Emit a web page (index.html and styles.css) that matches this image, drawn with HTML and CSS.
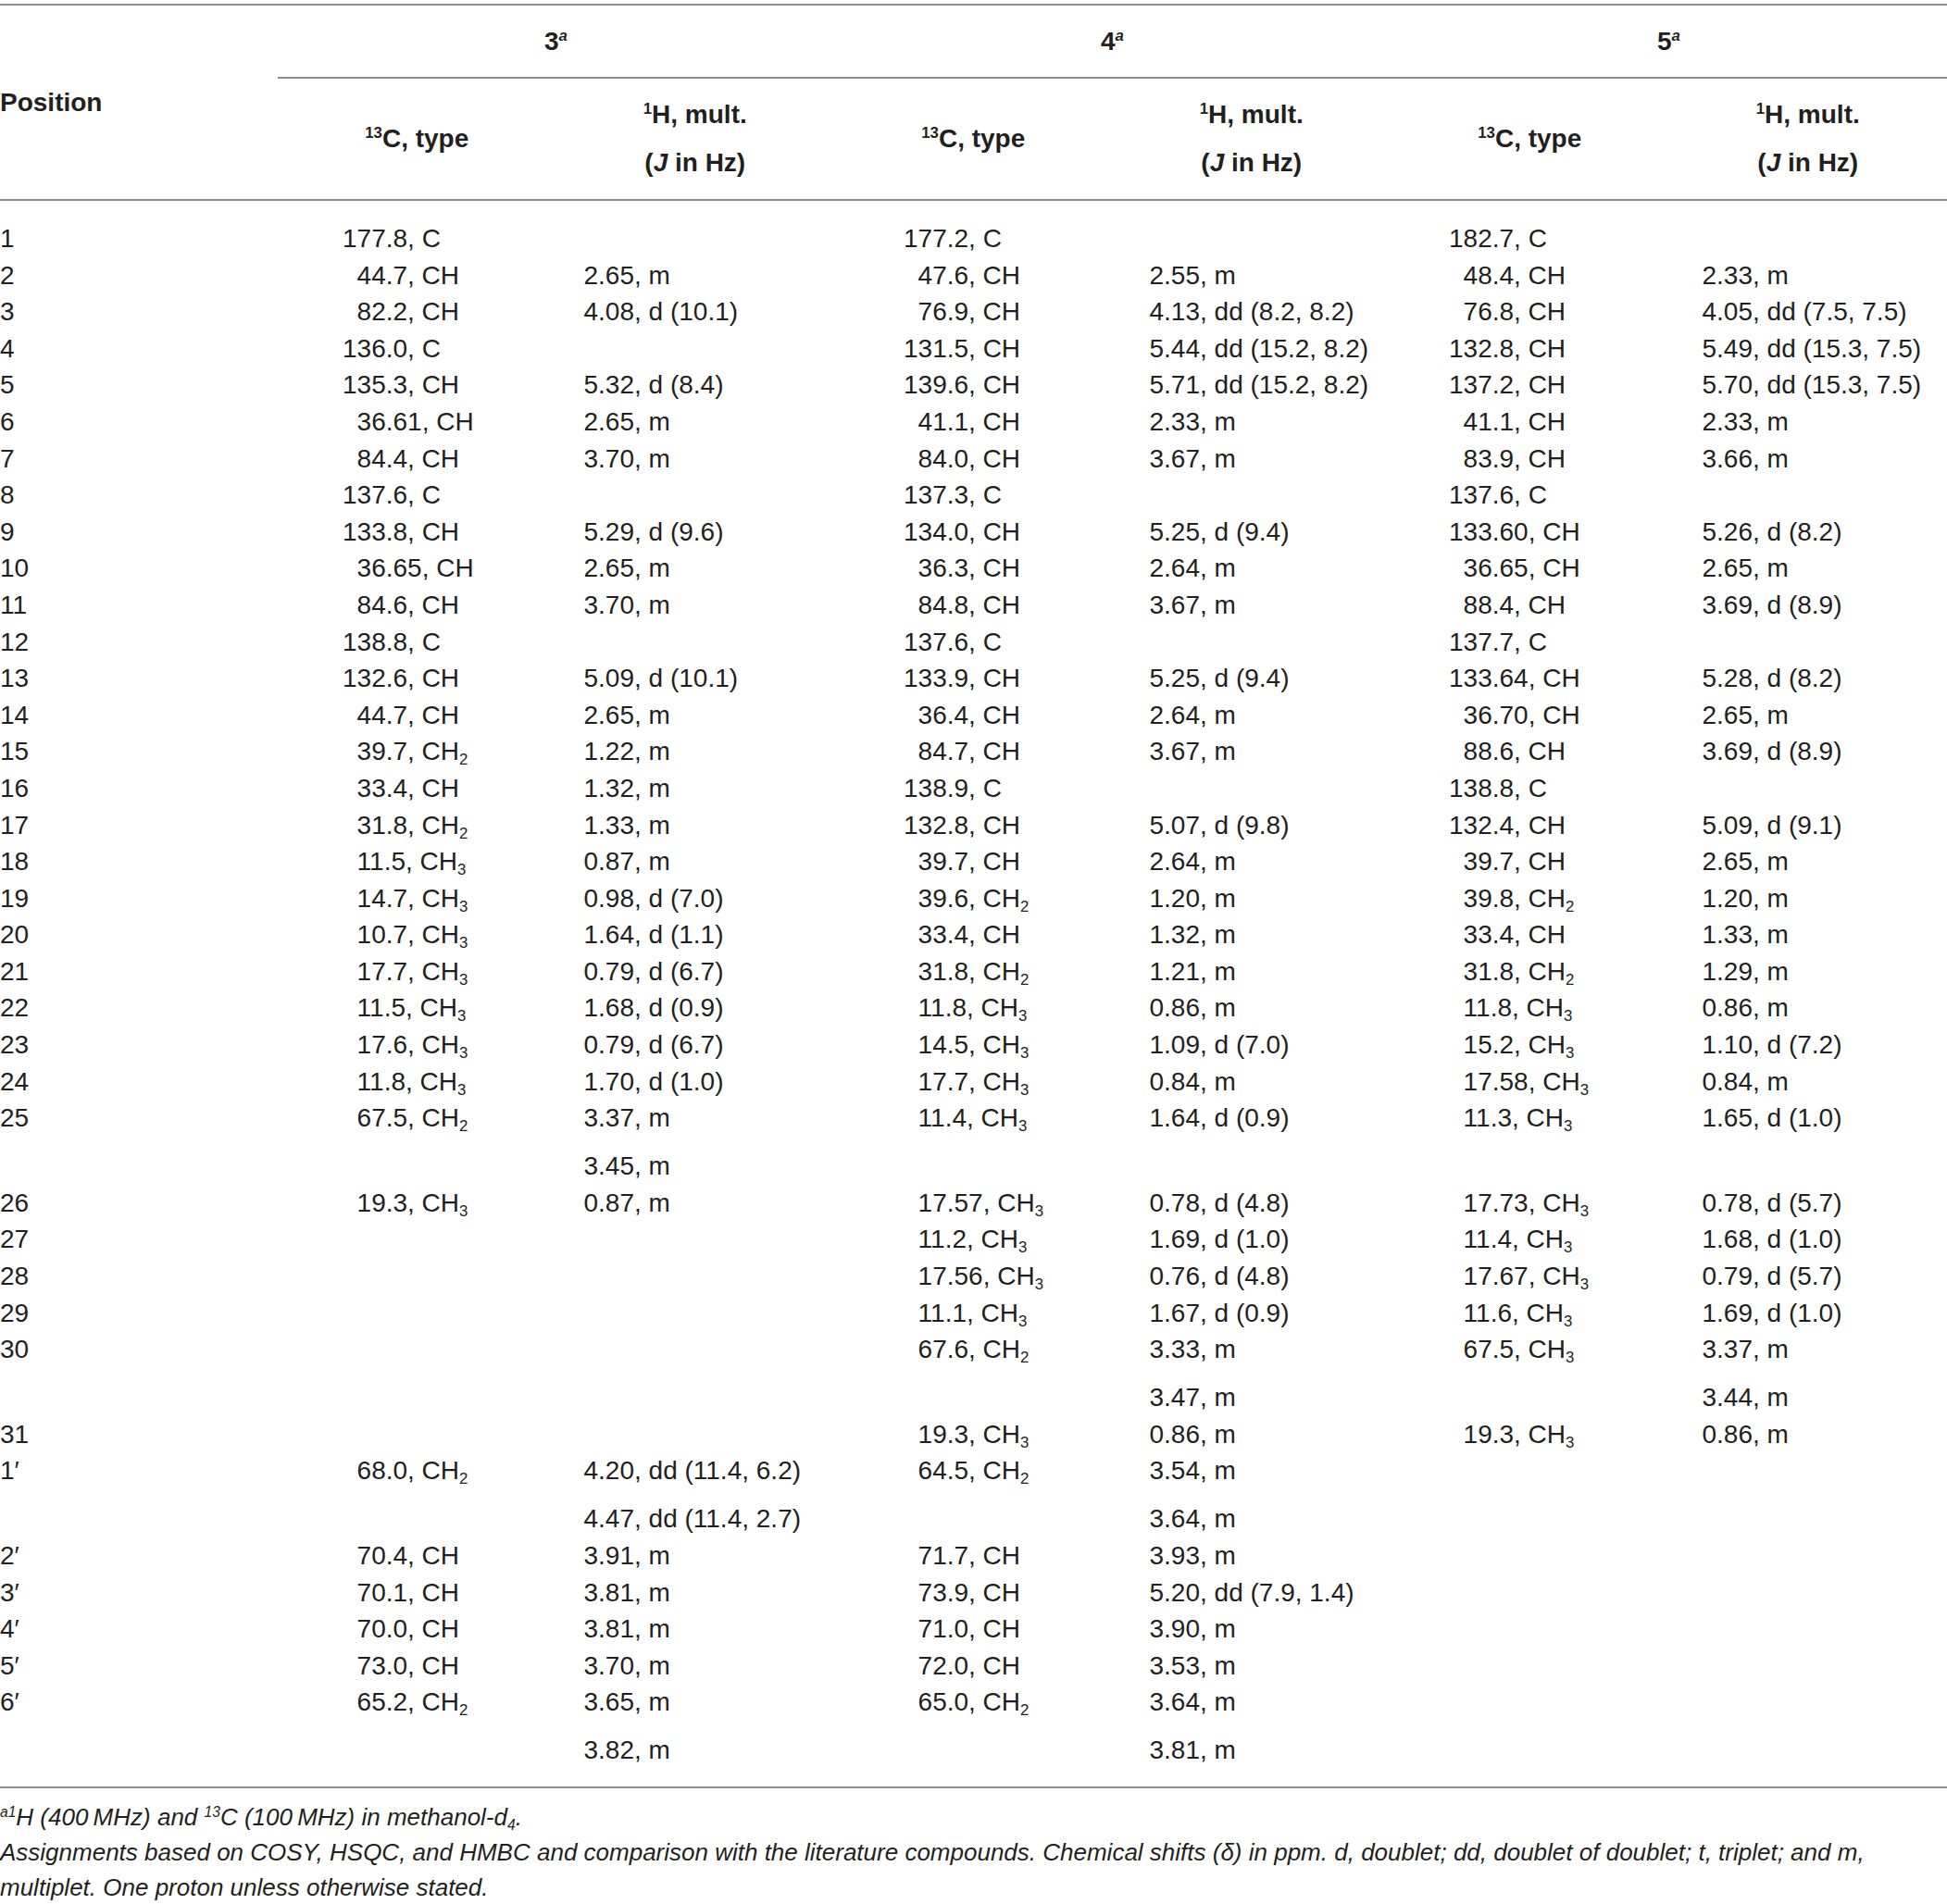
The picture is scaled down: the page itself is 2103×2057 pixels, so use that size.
FILE: index.html
```html
<!DOCTYPE html>
<html lang="en">
<head>
    <meta charset="UTF-8">
    <meta name="viewport" content="width=device-width, initial-scale=1.0">
    <title>NMR data of compounds 3-5</title>
    <link rel="stylesheet" href="styles.css">
</head>
<body>
    <table class="nmr">
        <thead>
            <tr class="grp">
                <th rowspan="2" class="pos">Position</th>
                <th colspan="2">3<sup><i>a</i></sup></th>
                <th colspan="2">4<sup><i>a</i></sup></th>
                <th colspan="2">5<sup><i>a</i></sup></th>
            </tr>
            <tr class="sub">
                <th><sup>13</sup>C, type</th>
                <th><div><sup>1</sup>H, mult.</div><div class="v2">(<i>J</i> in Hz)</div></th>
                <th><sup>13</sup>C, type</th>
                <th><div><sup>1</sup>H, mult.</div><div class="v2">(<i>J</i> in Hz)</div></th>
                <th><sup>13</sup>C, type</th>
                <th><div><sup>1</sup>H, mult.</div><div class="v2">(<i>J</i> in Hz)</div></th>
            </tr>
        </thead>
        <tbody>
            <tr class="first"><td>1</td><td>177.8, C</td><td></td><td>177.2, C</td><td></td><td>182.7, C</td><td></td></tr>
            <tr><td>2</td><td class="sh">44.7, CH</td><td>2.65, m</td><td class="sh">47.6, CH</td><td>2.55, m</td><td class="sh">48.4, CH</td><td>2.33, m</td></tr>
            <tr><td>3</td><td class="sh">82.2, CH</td><td>4.08, d (10.1)</td><td class="sh">76.9, CH</td><td>4.13, dd (8.2, 8.2)</td><td class="sh">76.8, CH</td><td>4.05, dd (7.5, 7.5)</td></tr>
            <tr><td>4</td><td>136.0, C</td><td></td><td>131.5, CH</td><td>5.44, dd (15.2, 8.2)</td><td>132.8, CH</td><td>5.49, dd (15.3, 7.5)</td></tr>
            <tr><td>5</td><td>135.3, CH</td><td>5.32, d (8.4)</td><td>139.6, CH</td><td>5.71, dd (15.2, 8.2)</td><td>137.2, CH</td><td>5.70, dd (15.3, 7.5)</td></tr>
            <tr><td>6</td><td class="sh">36.61, CH</td><td>2.65, m</td><td class="sh">41.1, CH</td><td>2.33, m</td><td class="sh">41.1, CH</td><td>2.33, m</td></tr>
            <tr><td>7</td><td class="sh">84.4, CH</td><td>3.70, m</td><td class="sh">84.0, CH</td><td>3.67, m</td><td class="sh">83.9, CH</td><td>3.66, m</td></tr>
            <tr><td>8</td><td>137.6, C</td><td></td><td>137.3, C</td><td></td><td>137.6, C</td><td></td></tr>
            <tr><td>9</td><td>133.8, CH</td><td>5.29, d (9.6)</td><td>134.0, CH</td><td>5.25, d (9.4)</td><td>133.60, CH</td><td>5.26, d (8.2)</td></tr>
            <tr><td>10</td><td class="sh">36.65, CH</td><td>2.65, m</td><td class="sh">36.3, CH</td><td>2.64, m</td><td class="sh">36.65, CH</td><td>2.65, m</td></tr>
            <tr><td>11</td><td class="sh">84.6, CH</td><td>3.70, m</td><td class="sh">84.8, CH</td><td>3.67, m</td><td class="sh">88.4, CH</td><td>3.69, d (8.9)</td></tr>
            <tr><td>12</td><td>138.8, C</td><td></td><td>137.6, C</td><td></td><td>137.7, C</td><td></td></tr>
            <tr><td>13</td><td>132.6, CH</td><td>5.09, d (10.1)</td><td>133.9, CH</td><td>5.25, d (9.4)</td><td>133.64, CH</td><td>5.28, d (8.2)</td></tr>
            <tr><td>14</td><td class="sh">44.7, CH</td><td>2.65, m</td><td class="sh">36.4, CH</td><td>2.64, m</td><td class="sh">36.70, CH</td><td>2.65, m</td></tr>
            <tr><td>15</td><td class="sh">39.7, CH<sub>2</sub></td><td>1.22, m</td><td class="sh">84.7, CH</td><td>3.67, m</td><td class="sh">88.6, CH</td><td>3.69, d (8.9)</td></tr>
            <tr><td>16</td><td class="sh">33.4, CH</td><td>1.32, m</td><td>138.9, C</td><td></td><td>138.8, C</td><td></td></tr>
            <tr><td>17</td><td class="sh">31.8, CH<sub>2</sub></td><td>1.33, m</td><td>132.8, CH</td><td>5.07, d (9.8)</td><td>132.4, CH</td><td>5.09, d (9.1)</td></tr>
            <tr><td>18</td><td class="sh">11.5, CH<sub>3</sub></td><td>0.87, m</td><td class="sh">39.7, CH</td><td>2.64, m</td><td class="sh">39.7, CH</td><td>2.65, m</td></tr>
            <tr><td>19</td><td class="sh">14.7, CH<sub>3</sub></td><td>0.98, d (7.0)</td><td class="sh">39.6, CH<sub>2</sub></td><td>1.20, m</td><td class="sh">39.8, CH<sub>2</sub></td><td>1.20, m</td></tr>
            <tr><td>20</td><td class="sh">10.7, CH<sub>3</sub></td><td>1.64, d (1.1)</td><td class="sh">33.4, CH</td><td>1.32, m</td><td class="sh">33.4, CH</td><td>1.33, m</td></tr>
            <tr><td>21</td><td class="sh">17.7, CH<sub>3</sub></td><td>0.79, d (6.7)</td><td class="sh">31.8, CH<sub>2</sub></td><td>1.21, m</td><td class="sh">31.8, CH<sub>2</sub></td><td>1.29, m</td></tr>
            <tr><td>22</td><td class="sh">11.5, CH<sub>3</sub></td><td>1.68, d (0.9)</td><td class="sh">11.8, CH<sub>3</sub></td><td>0.86, m</td><td class="sh">11.8, CH<sub>3</sub></td><td>0.86, m</td></tr>
            <tr><td>23</td><td class="sh">17.6, CH<sub>3</sub></td><td>0.79, d (6.7)</td><td class="sh">14.5, CH<sub>3</sub></td><td>1.09, d (7.0)</td><td class="sh">15.2, CH<sub>3</sub></td><td>1.10, d (7.2)</td></tr>
            <tr><td>24</td><td class="sh">11.8, CH<sub>3</sub></td><td>1.70, d (1.0)</td><td class="sh">17.7, CH<sub>3</sub></td><td>0.84, m</td><td class="sh">17.58, CH<sub>3</sub></td><td>0.84, m</td></tr>
            <tr><td>25</td><td class="sh">67.5, CH<sub>2</sub></td><td><div>3.37, m</div><div class="v2">3.45, m</div></td><td class="sh">11.4, CH<sub>3</sub></td><td>1.64, d (0.9)</td><td class="sh">11.3, CH<sub>3</sub></td><td>1.65, d (1.0)</td></tr>
            <tr><td>26</td><td class="sh">19.3, CH<sub>3</sub></td><td>0.87, m</td><td class="sh">17.57, CH<sub>3</sub></td><td>0.78, d (4.8)</td><td class="sh">17.73, CH<sub>3</sub></td><td>0.78, d (5.7)</td></tr>
            <tr><td>27</td><td></td><td></td><td class="sh">11.2, CH<sub>3</sub></td><td>1.69, d (1.0)</td><td class="sh">11.4, CH<sub>3</sub></td><td>1.68, d (1.0)</td></tr>
            <tr><td>28</td><td></td><td></td><td class="sh">17.56, CH<sub>3</sub></td><td>0.76, d (4.8)</td><td class="sh">17.67, CH<sub>3</sub></td><td>0.79, d (5.7)</td></tr>
            <tr><td>29</td><td></td><td></td><td class="sh">11.1, CH<sub>3</sub></td><td>1.67, d (0.9)</td><td class="sh">11.6, CH<sub>3</sub></td><td>1.69, d (1.0)</td></tr>
            <tr><td>30</td><td></td><td></td><td class="sh">67.6, CH<sub>2</sub></td><td><div>3.33, m</div><div class="v2">3.47, m</div></td><td class="sh">67.5, CH<sub>3</sub></td><td><div>3.37, m</div><div class="v2">3.44, m</div></td></tr>
            <tr><td>31</td><td></td><td></td><td class="sh">19.3, CH<sub>3</sub></td><td>0.86, m</td><td class="sh">19.3, CH<sub>3</sub></td><td>0.86, m</td></tr>
            <tr><td>1&prime;</td><td class="sh">68.0, CH<sub>2</sub></td><td><div>4.20, dd (11.4, 6.2)</div><div class="v2">4.47, dd (11.4, 2.7)</div></td><td class="sh">64.5, CH<sub>2</sub></td><td><div>3.54, m</div><div class="v2">3.64, m</div></td><td></td><td></td></tr>
            <tr><td>2&prime;</td><td class="sh">70.4, CH</td><td>3.91, m</td><td class="sh">71.7, CH</td><td>3.93, m</td><td></td><td></td></tr>
            <tr><td>3&prime;</td><td class="sh">70.1, CH</td><td>3.81, m</td><td class="sh">73.9, CH</td><td>5.20, dd (7.9, 1.4)</td><td></td><td></td></tr>
            <tr><td>4&prime;</td><td class="sh">70.0, CH</td><td>3.81, m</td><td class="sh">71.0, CH</td><td>3.90, m</td><td></td><td></td></tr>
            <tr><td>5&prime;</td><td class="sh">73.0, CH</td><td>3.70, m</td><td class="sh">72.0, CH</td><td>3.53, m</td><td></td><td></td></tr>
            <tr class="last"><td>6&prime;</td><td class="sh">65.2, CH<sub>2</sub></td><td><div>3.65, m</div><div class="v2">3.82, m</div></td><td class="sh">65.0, CH<sub>2</sub></td><td><div>3.64, m</div><div class="v2">3.81, m</div></td><td></td><td></td></tr>
        </tbody>
    </table>
    <div class="notes">
        <p><sup>a1</sup>H (400&#8201;MHz) and <sup>13</sup>C (100&#8201;MHz) in methanol-d<sub>4</sub>.</p>
        <p>Assignments based on COSY, HSQC, and HMBC and comparison with the literature compounds. Chemical shifts (&delta;) in ppm. d, doublet; dd, doublet of doublet; t, triplet; and m, multiplet. One proton unless otherwise stated.</p>
    </div>
</body>
</html>
```

FILE: styles.css
```css
body {
    margin: 0;
    background: #fff;
    color: #231f20;
    font-family: "Liberation Sans", Arial, sans-serif;
}
.nmr {
    width: 2103px;
    table-layout: fixed;
    border-collapse: collapse;
    margin-top: 4px;
    border-top: 2px solid #8c8c8c;
    border-bottom: 2px solid #8c8c8c;
    font-size: 28px;
}
.nmr th {
    font-weight: bold;
    text-align: center;
    vertical-align: middle;
    padding: 0;
    line-height: 39.6px;
}
.nmr th.pos {
    text-align: left;
    width: 300px;
    border-bottom: 2px solid #8c8c8c;
}
.grp th {
    height: 77px;
    border-bottom: 2px solid #8c8c8c;
}
.sub th {
    height: 130px;
    border-bottom: 2px solid #8c8c8c;
}
.sub th:nth-child(1) { width: 288px; }
.sub th:nth-child(2) { width: 312px; }
.sub th:nth-child(3) { width: 300px; }
.sub th:nth-child(4) { width: 303px; }
.sub th:nth-child(5) { width: 297px; }
.sub th:nth-child(6) { width: 303px; }
.v2 {
    margin-top: 12.4px;
}
sup {
    font-size: 0.6em;
    line-height: 0;
    vertical-align: 0.6em;
}
sub {
    font-size: 0.6em;
    line-height: 0;
    vertical-align: -0.3em;
}
.nmr td {
    padding: 0;
    line-height: 39.6px;
    vertical-align: top;
    text-align: left;
    white-space: nowrap;
}
.nmr td:nth-child(2) { padding-left: 70px; }
.nmr td:nth-child(3) { padding-left: 30px; }
.nmr td:nth-child(4) { padding-left: 75px; }
.nmr td:nth-child(5) { padding-left: 40px; }
.nmr td:nth-child(6) { padding-left: 63px; }
.nmr td:nth-child(7) { padding-left: 36px; }
.nmr td.sh {
    text-indent: 0.556em;
}
.first td {
    padding-top: 21px;
}
.last td {
    padding-bottom: 19px;
}
.notes {
    padding-top: 12px;
    font-size: 26px;
    font-style: italic;
    line-height: 38px;
    width: 2060px;
}
.notes p {
    margin: 0;
}
```
